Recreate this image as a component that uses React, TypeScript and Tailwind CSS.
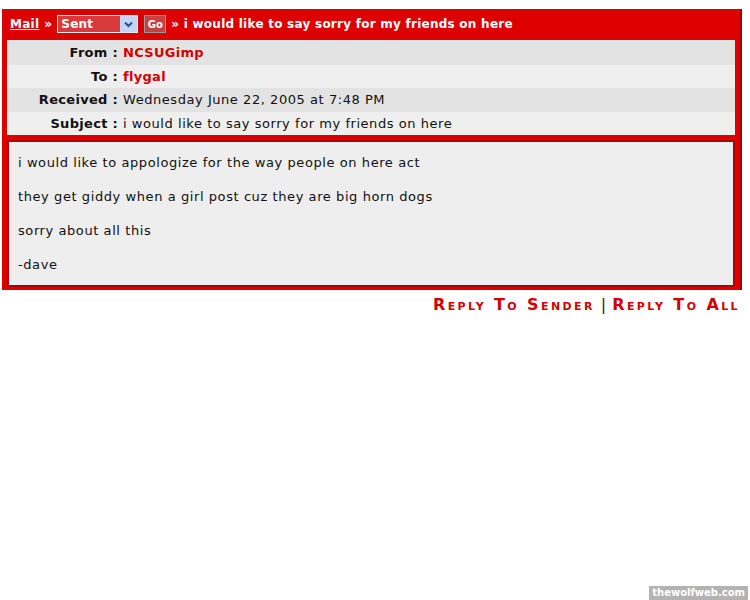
import React from "react";

const rows = [
  { label: "From", value: "NCSUGimp", red: true },
  { label: "To", value: "flygal", red: true },
  { label: "Received", value: "Wednesday June 22, 2005 at 7:48 PM", red: false },
  { label: "Subject", value: "i would like to say sorry for my friends on here", red: false },
];

const body = [
  "i would like to appologize for the way people on here act",
  "they get giddy when a girl post cuz they are big horn dogs",
  "sorry about all this",
  "-dave",
];

export default function App() {
  return (
    <div className="relative h-[600px] w-[750px] bg-white font-['DejaVu_Sans',Verdana,sans-serif]">
      <div className="pl-[2px] pr-[8px] pt-[9px]">
        <div className="border-r-2 border-r-[#a00000] bg-[#dd0000] px-[5px] pb-[3px]">
          {/* header bar */}
          <div className="flex h-[30px] items-center gap-[5px] text-[12px] font-bold tracking-[0.25px] text-white">
            <a className="ml-[3px] underline">Mail</a>
            <span>»</span>
            <div className="flex h-[18px] w-[81px] items-center border border-[#e8e8e8] bg-[#d63a3a]">
              <span className="flex-1 pl-[3px] leading-none">Sent</span>
              <span className="flex h-[16px] w-[17px] items-center justify-center bg-[#c4d6f5]">
                <svg width="9" height="7" viewBox="0 0 9 7">
                  <path d="M1 1.5 L4.5 5 L8 1.5" fill="none" stroke="#2a4aa0" strokeWidth="2" />
                </svg>
              </span>
            </div>
            <div className="ml-[1px] flex h-[18px] w-[22px] items-center justify-center border border-[#999] bg-[#c84040] text-[10px] tracking-normal">
              Go
            </div>
            <span>» i would like to say sorry for my friends on here</span>
          </div>
          {/* detail rows */}
          <div className="mt-[1px] border-t border-[#cfe3e3] text-[13px] tracking-[0.55px]">
            {rows.map((r, i) => (
              <div
                key={r.label}
                className={`flex h-[23.5px] items-center ${i % 2 === 0 ? "bg-[#e3e3e3]" : "bg-[#efefef]"}`}
              >
                <div className="w-[114px] pr-[3px] text-right font-bold tracking-[0.3px] text-[#111]">{r.label} :</div>
                <div className={r.red ? "pl-[2px] font-bold tracking-[0.3px] text-[#d40000]" : "pl-[2px] text-[#111]"}>{r.value}</div>
              </div>
            ))}
          </div>
          {/* message body */}
          <div className="mt-[5px] border-2 border-[#b00000] bg-[#eeeeee] px-[9px] pt-[12px] text-[13px] tracking-[0.58px] text-[#111]">
            {body.map((line, i) => (
              <p key={line} className={`${i < body.length - 1 ? "mb-[16px]" : "mb-[11px]"} leading-[18px]`}>
                {line}
              </p>
            ))}
          </div>
        </div>
      </div>
      {/* reply links */}
      <div className="mt-[5px] flex justify-end pr-[10px] text-[16px] font-semibold leading-[20px] tracking-[2.4px] text-[#d40000] [font-variant:small-caps]">
        <span>Reply To Sender</span>
        <span className="mx-[6px] font-normal tracking-normal text-[#222]">|</span>
        <span>Reply To All</span>
      </div>
      {/* watermark */}
      <div className="absolute bottom-0 right-[2px] bg-[#b3b3b3] px-[3px] text-[10px] font-bold leading-[14px] text-white">
        thewolfweb.com
      </div>
    </div>
  );
}
